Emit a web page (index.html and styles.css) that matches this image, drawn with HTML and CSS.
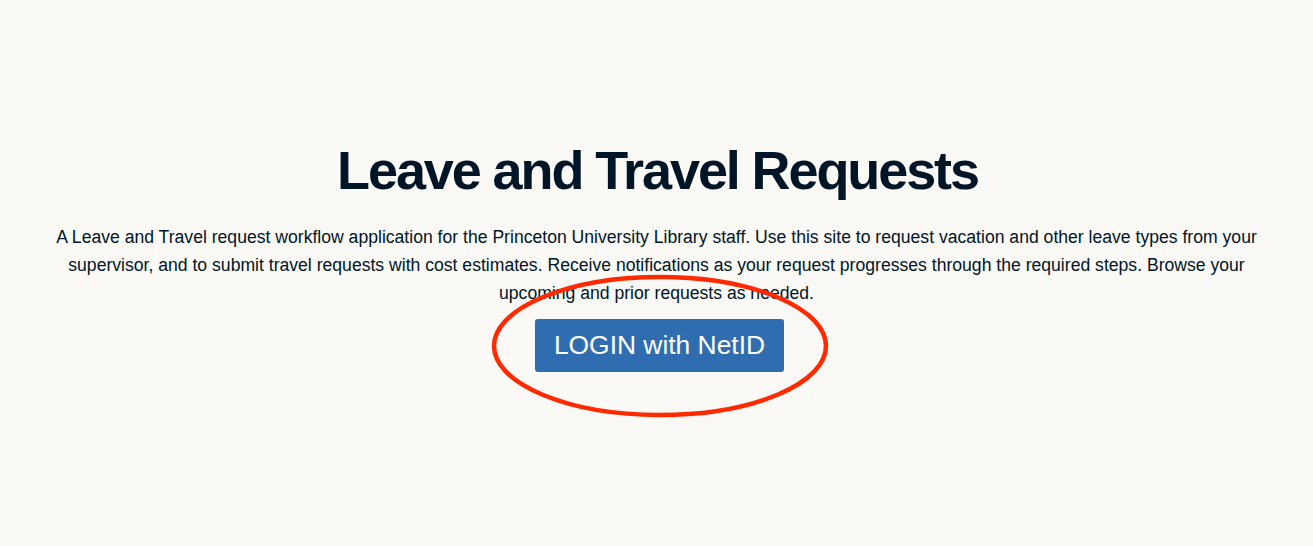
FILE: index.html
```html
<!DOCTYPE html>
<html lang="en">
<head>
<meta charset="utf-8">
<title>Leave and Travel Requests</title>
<link rel="stylesheet" href="styles.css">
</head>
<body>
<main class="hero">
  <h1 class="title">Leave and Travel Requests</h1>
  <p class="lead">A Leave and Travel request workflow application for the Princeton University Library staff. Use this site to request vacation and other leave types from your supervisor, and to submit travel requests with cost estimates. Receive notifications as your request progresses through the required steps. Browse your upcoming and prior requests as needed.</p>
  <div class="action">
    <a class="login" href="#">LOGIN with NetID</a>
    <svg class="annotation" width="350" height="150" viewBox="0 0 350 150" aria-hidden="true">
      <ellipse cx="175" cy="75" rx="166" ry="69" fill="none" stroke="#ff2a00" stroke-width="4.5"/>
    </svg>
  </div>
</main>
</body>
</html>
```
FILE: styles.css
```css
html, body {
  margin: 0;
  padding: 0;
}
body {
  background: #faf9f6;
  color: #001526;
  font-family: "Liberation Sans", Arial, Helvetica, sans-serif;
  width: 1313px;
  height: 546px;
  overflow: hidden;
}
.hero {
  display: flex;
  flex-direction: column;
  align-items: center;
  padding: 136px 50px 0;
}
.title {
  margin: 0 0 0 2px;
  font-size: 54px;
  font-weight: 700;
  line-height: 68px;
  letter-spacing: -2.1px;
}
.lead {
  margin: 19px 0 0;
  font-size: 17.6px;
  line-height: 28px;
  text-align: center;
  max-width: 1210px;
}
.action {
  position: relative;
  margin: 12px 0 0 6px;
}
.login {
  display: block;
  background: #2f6db0;
  color: #ffffff;
  text-decoration: none;
  font-size: 26.4px;
  line-height: 53px;
  padding: 0 19px;
  border-radius: 3px;
}
.annotation {
  position: absolute;
  left: 50%;
  top: 50%;
  transform: translate(-50%, -50%);
  pointer-events: none;
}
```
